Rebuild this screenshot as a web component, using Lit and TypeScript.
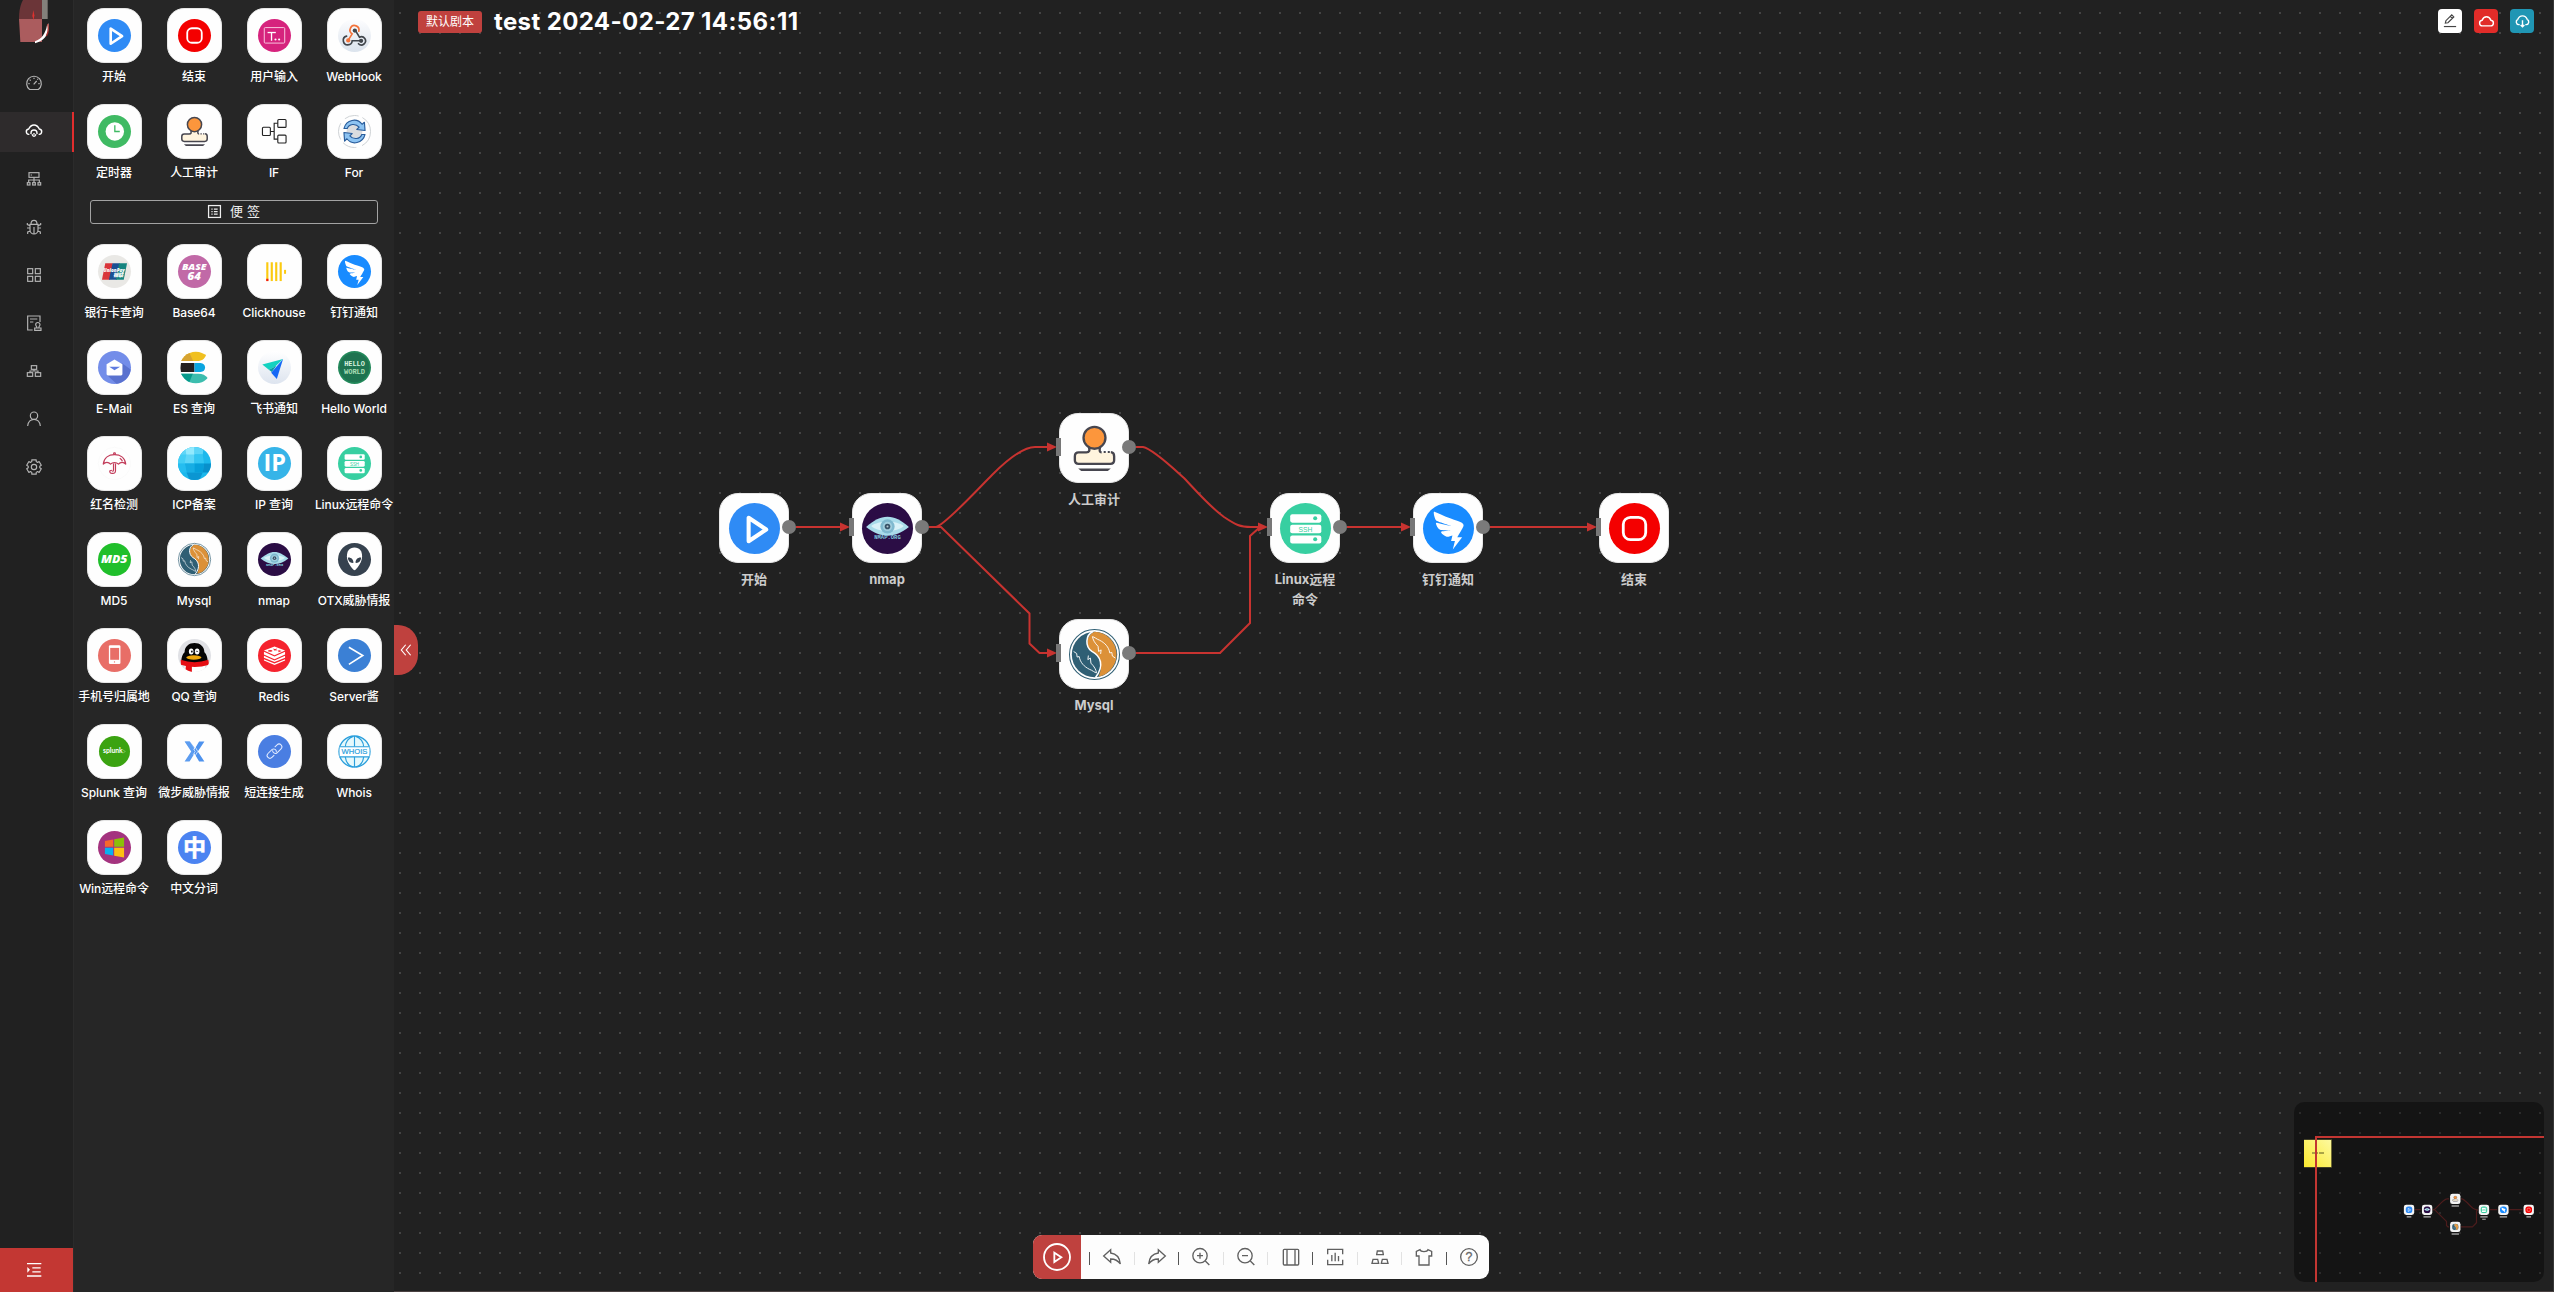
import { LitElement, html, svg, css, type SVGTemplateResult } from "lit";
import { customElement, property } from "lit/decorators.js";

type Glyphs = Record<string, SVGTemplateResult>;

const disc = (fill: string) => svg`<circle cx="50" cy="50" r="50" fill=${fill} />`;

const DOLPHIN = "M9 44 L15 48 L16 55 L20 54 C22 66 30 74 40 79 C46 81 51 86 54 86 C53 80 50 74 43 67 L42 57 L37 60 L38 52";

/* App glyphs, drawn on a 100 x 100 board. */
const APPS: Glyphs = {
  start: svg`${disc("#2f8bf5")}<path d="M38.5 29 V75 L73 52 Z" fill="none" stroke="#fff" stroke-width="8" stroke-linejoin="round" />`,
  end: svg`${disc("#f40000")}<rect x="28" y="28" width="44" height="44" rx="14" fill="none" stroke="#fff" stroke-width="5.5" />`,
  input: svg`${disc("#d6237d")}<rect x="19" y="26" width="62" height="47" rx="3" fill="none" stroke="#f9c4de" stroke-width="3" />
    <path d="M29 41 H54" stroke="#fff" stroke-width="4" /><path d="M41 41 V66" stroke="#fff" stroke-width="4" />
    <circle cx="53" cy="62" r="3.2" fill="#fff" /><circle cx="64" cy="62" r="3.2" fill="#fff" />`,
  webhook: svg`<defs><linearGradient id="wh" x1="0" y1="0" x2="0" y2="1"><stop offset="0" stop-color="#fdfdfe" /><stop offset="1" stop-color="#dbe3ed" /></linearGradient></defs>
    ${disc("url(#wh)")}<g fill="none" stroke-width="5" stroke-linecap="round">
    <path d="M63 37 A13.5 13.5 0 1 0 43 45 L33 61" stroke="#f3733b" /><path d="M26 52 A13.5 13.5 0 1 0 43 66 H66" stroke="#41464c" />
    <path d="M53 35 L65 55 A12.5 12.5 0 1 1 62 75" stroke="#41464c" /></g>
    <circle cx="51" cy="35" r="6.5" fill="#41464c" /><circle cx="31" cy="65" r="6.5" fill="#f3733b" /><circle cx="70" cy="66" r="6.5" fill="#41464c" />`,
  timer: svg`${disc("#3fba63")}<circle cx="51" cy="50" r="28" fill="#fff" /><path d="M51 31 V50 H66" fill="none" stroke="#3fba63" stroke-width="4" />`,
  audit: svg`<path d="M40 48 C42 54 41 58 34 58 H18 Q12 58 12 64 V74 Q12 80 18 80 H82 Q88 80 88 74 V64 Q88 58 82 58 H68 Q58 58 60 48 Z" fill="#fff4de" />
    <path d="M39 47 C41 54 40 57.500 34 57.500 H19 Q11.500 57.500 11.500 65 V73 Q11.500 80 19 80 H81 Q88.500 80 88.500 73 V65 Q88.500 57.500 82 57 M61 47 C59 54 60 57.500 64 57.500" fill="none" stroke="#47464f" stroke-width="4.600" />
    <path d="M68 57 H80" stroke="#47464f" stroke-width="4" stroke-dasharray="4 4" />
    <circle cx="50" cy="29" r="21.500" fill="#fc963c" stroke="#47464f" stroke-width="4.600" />
    <path d="M18 89 H82 L76 94 H24 Z" fill="#47464f" />`,
  branch: svg`<g fill="none" stroke="#222" stroke-width="3.400"><rect x="13.500" y="37" width="24" height="25" rx="3" /><rect x="60" y="13.500" width="25" height="24" rx="3" /><rect x="60" y="61" width="25" height="24" rx="3" />
    <path d="M38 50 H49 M60 25 H49 V73 H60" /></g>`,
  loop: svg`<circle cx="50" cy="50" r="48.500" fill="none" stroke="#c4c8cc" stroke-width="2.500" stroke-dasharray="52 18 44 12" />
    <circle cx="50" cy="50" r="24" fill="#dadcdf" /><g fill="#8cc3f2" stroke="#285c9b" stroke-width="3.500" stroke-linejoin="round">
    <path d="M18 41 C25 13 58 8 73 28 L80 22 L82 47 L57 44 L64 37 C53 24 33 27 28 41 Z" /><path d="M82 59 C75 87 42 92 27 72 L20 79 L18 53 L43 56 L36 63 C47 76 67 73 72 59 Z" /></g>`,
  bank: svg`${disc("#e9e8e5")}<path d="M22 25 H45 L36 75 H12 Z" fill="#d9343a" /><path d="M44 25 H66 L57 75 H33 Z" fill="#1b4f93" /><path d="M64 25 H88 L78 75 H54 Z" fill="#14847f" />
    <text x="49" y="52" font-size="18" text-anchor="middle" class="gi" textLength="64" lengthAdjust="spacingAndGlyphs" fill="#fff">UnionPay</text><text x="61" y="68" font-size="16" text-anchor="middle" class="gi" fill="#fff">银联</text>`,
  base64: svg`${disc("#c169a7")}<text x="49" y="46" font-size="27" text-anchor="middle" class="gi" textLength="74" lengthAdjust="spacingAndGlyphs" fill="#fff">BASE</text><text x="49" y="77" font-size="29" text-anchor="middle" class="gi" textLength="40" lengthAdjust="spacingAndGlyphs" fill="#fff">64</text>`,
  clickhouse: svg`<g fill="#fbca10"><rect x="25" y="22" width="6.500" height="57" /><rect x="38.500" y="22" width="6.500" height="57" /><rect x="52" y="22" width="6.500" height="57" /><rect x="65.500" y="22" width="6.500" height="57" /><rect x="79" y="45" width="6" height="12" /></g><rect x="25" y="72" width="6.500" height="7" fill="#f2171b" />`,
  dingtalk: svg`${disc("#188bff")}<path transform="translate(4.800 8.600) scale(.089)" fill="#fff" d="M573.7 252.5C422.5 197.4 201.3 96.7 201.3 96.7c-15.7-4.1-17.9 11.1-17.9 11.1-5 61.1 33.6 160.5 53.6 182.8 19.9 22.3 319.1 113.7 319.1 113.7S326 357.9 270.5 341.9c-55.6-16-37.9 17.8-37.9 17.8 11.4 61.7 64.9 131.8 107.2 138.4 42.2 6.6 220.1 4 220.1 4s-35.5 4.100-93.200 11.900c-42.700 5.800-97 12.500-111.100 17.800-33.100 12.500 24 62.600 24 62.600 84.700 76.800 129.700 50.500 129.700 50.500 33.300-10.700 61.400-18.500 85.200-24.200L565 743.100h84.600L603 928l205.300-271.900H700.800l22.300-38.700c.3.5.4.8.4.8S799.800 496.100 829 433.800l.6-1h-.1c5-10.800 8.600-19.700 10-25.800 17-71.300-114.500-99.400-265.800-154.500z" />`,
  email: svg`${disc("#738de9")}<path d="M73 37 L99 56 A50 50 0 0 1 56 99.500 L27 73 Z" fill="#5a72cf" /><path d="M26 40 L50 26 L74 40 V70 Q74 74 70 74 H30 Q26 74 26 70 Z" fill="#fff" /><path d="M34 48 H67 L50 58 Z" fill="#5f7be0" />`,
  es: svg`<clipPath id="esc"><circle cx="54" cy="50" r="48" /></clipPath><g clip-path="url(#esc)"><path d="M8 0 H90 C84 22 74 30 62 30 H8 Z" fill="#f0c020" /><path d="M8 0 H32 L46 30 H8 Z" fill="#d6a331" /><path d="M8 69 H62 Q80 69 90 82 V100 H8 Z" fill="#3cbdae" /><path d="M8 69 H45 L32 100 H8 Z" fill="#079a8b" /></g>
    <path d="M9 36 H50 V64 H9 Q6 50 9 36 Z" fill="#231f20" /><path d="M50 36 H68 Q82 38 82 50 Q82 62 68 64 H50 Z" fill="#0ba5df" />`,
  feishu: svg`<defs><linearGradient id="fs" x1="0" y1="0" x2="0" y2="1"><stop offset="0" stop-color="#fff" /><stop offset="1" stop-color="#dde4ef" /></linearGradient></defs>${disc("url(#fs)")}
    <path d="M13 41 L76 24 L52 47 L33 57 Z" fill="#14d2c0" /><path d="M33 57 L56 45 L42 64 Z" fill="#0a9da6" /><path d="M76 24 L57 85 L40 66 Z" fill="#1668f5" />`,
  hello: svg`${disc("#23895b")}<circle cx="50" cy="50" r="45" fill="#1e7350" /><text x="50" y="44" font-size="19" text-anchor="middle" class="gm" textLength="62" lengthAdjust="spacingAndGlyphs" fill="#d7f2df">HELLO</text><text x="50" y="69" font-size="19" text-anchor="middle" class="gm" textLength="64" lengthAdjust="spacingAndGlyphs" fill="#a9dcb4">WORLD</text>`,
  umbrella: svg`<circle cx="50" cy="50" r="49" fill="none" stroke="#f3f3f3" /><g fill="none" stroke="#c23c5a" stroke-width="3.600" stroke-linejoin="round">
    <path d="M16 52 C18 32 33 23 50 23 C67 23 82 32 84 52 C78 45 68 45 62 52 C56 46 44 46 38 52 C32 45 22 45 16 52 Z" /><path d="M47 23 L48 18 H52 L53 23 M66 34 Q72 38 74 43 M47 50 V70 Q47 74 43 73 M53 50 V72 Q53 81 43 80 Q34 79 36 72 L42 71" /></g>`,
  icp: svg`<clipPath id="icp"><circle cx="50" cy="50" r="50" /></clipPath><g clip-path="url(#icp)"><rect width="100" height="100" fill="#1cb8ec" /><path d="M0 0 H50 V50 H0 Z" fill="#5fd6f8" /><path d="M22 0 H50 V23 H25 Z" fill="#92e9fd" /><path d="M50 0 H78 L75 23 H50 Z" fill="#5cd5f8" /><path d="M50 23 H75 L79 50 H50 Z" fill="#33c5f2" />
    <path d="M0 23 H25 L20 50 H0 Z" fill="#43cef5" /><path d="M21 50 H50 V77 H26 Z" fill="#17ade4" /><path d="M50 50 H79 L75 77 H50 Z" fill="#079fda" /><path d="M79 50 H100 V77 H75 Z" fill="#0890cb" /><path d="M26 77 H75 L65 100 H35 Z" fill="#0b96d2" /><path d="M0 50 H21 L26 77 H0 Z" fill="#25bdf0" /></g>`,
  ip: svg`${disc("#36b4e8")}<text x="51" y="74" font-size="69" text-anchor="middle" class="gb" textLength="68" lengthAdjust="spacingAndGlyphs" fill="#fff">IP</text>`,
  ssh: svg`${disc("#37cfa1")}<g fill="#fff"><rect x="20" y="22" width="61" height="16.500" rx="4" /><rect x="20" y="42.500" width="61" height="17" rx="4" /><rect x="20" y="63.500" width="61" height="16" rx="4" /></g><circle cx="69" cy="30" r="4" fill="#37cfa1" /><circle cx="69" cy="71" r="4" fill="#37cfa1" />
    <text x="50" y="56.500" font-size="15.500" text-anchor="middle" class="gn" textLength="27" lengthAdjust="spacingAndGlyphs" fill="#37cfa1">SSH</text>`,
  md5: svg`${disc("#20bf2b")}<text x="49" y="62" font-size="34" text-anchor="middle" class="gi" textLength="80" lengthAdjust="spacingAndGlyphs" fill="#fff">MD5</text>`,
  mysql: svg`<circle cx="50" cy="50" r="49" fill="#fff" stroke="#2f5f74" stroke-width="2" /><circle cx="50" cy="50" r="44.500" fill="#2f5f74" />
    <path d="M50 5.500 C34 12 31 33 45 44 C62 53 68 70 58 93.500 A44.500 44.500 0 0 0 50 5.500 Z" fill="#dc9138" /><path d="M47 5 C32 12 31 34 45 44 C62 53 70 72 52 95" fill="none" stroke="#fff" stroke-width="3" />
    <g fill="none" stroke="#fff" stroke-width="1.800" stroke-linejoin="round"><path d=${DOLPHIN} /><path d=${DOLPHIN} transform="rotate(180 50 50.500)" /></g>`,
  nmap: svg`${disc("#2b0d45")}<path d="M8 47 C24 34 35 27 50 27 C65 27 76 34 92 47 C78 58 64 64 50 64 C36 64 22 58 8 47 Z" fill="#a9dcea" /><path d="M18 45 C32 34 68 34 82 45 C68 58 32 58 18 45 Z" fill="#d9f2f8" /><circle cx="50" cy="46" r="14" fill="#7fb9cf" /><circle cx="50" cy="46" r="9" fill="#a2cfdf" /><circle cx="50" cy="46" r="5.500" fill="#385368" /><circle cx="50" cy="46" r="2" fill="#b5c8d0" />
    <text x="50" y="70.500" font-size="9" text-anchor="middle" class="gm" textLength="52" lengthAdjust="spacingAndGlyphs" fill="#7cc8dd">NMAP.ORG</text>`,
  otx: svg`${disc("#36424f")}<path d="M50 14 C66 14 73 26 73 40 C73 58 60 74 53 81 Q50 84 47 81 C40 74 27 58 27 40 C27 26 34 14 50 14 Z" fill="#fff" /><path d="M30 44 C40 43 47 50 47 60 C38 62 30 55 30 44 Z M70 44 C60 43 53 50 53 60 C62 62 70 55 70 44 Z" fill="#36424f" />`,
  phone: svg`${disc("#e86e67")}<rect x="33" y="19" width="35" height="57" rx="4" fill="#fff" /><rect x="37" y="27" width="27" height="36" fill="#e86e67" /><circle cx="50" cy="69.500" r="2" fill="#e86e67" />`,
  qq: svg`<clipPath id="qqc"><circle cx="50" cy="50" r="50" /></clipPath>${disc("#e0e1e5")}<g clip-path="url(#qqc)"><path d="M11 76 C8 58 14 46 20 40 C20 22 34 12 50 12 C66 12 80 22 80 40 C86 46 92 58 89 76 Z" fill="#050505" /><path d="M20 74 H82 V100 H20 Z" fill="#fff" /><path d="M8 63 Q50 78 92 63 L94 78 Q50 92 9 78 Z" fill="#e60d12" /><path d="M24 80 H42 V100 H22 Z" fill="#e60d12" /></g>
    <ellipse cx="40" cy="38" rx="7" ry="9" fill="#fff" /><ellipse cx="58" cy="38" rx="7" ry="9" fill="#fff" /><ellipse cx="42" cy="38" rx="2.500" ry="3.500" fill="#000" /><path d="M54 39 Q57 34 61 39" fill="none" stroke="#000" stroke-width="2" /><ellipse cx="48" cy="56" rx="23" ry="6.500" fill="#f0a80c" />`,
  redis: svg`${disc("#f5232e")}<g fill="#fff"><path d="M18 35 L50 23 L82 35 L50 49 Z" /><path d="M18 39 L50 53 L82 39 V47 L50 61 L18 47 Z" /><path d="M18 51 L50 65 L82 51 V57 L50 70 L18 57 Z" /><path d="M18 61 L50 74 L82 61 V65 L50 79 L18 65 Z" /></g><g fill="#f5232e"><ellipse cx="37" cy="36" rx="7" ry="2.500" /><path d="M46 29 L52 31 L57 28 L55 32 L60 34 L49 35 Z" /><path d="M62 33 L72 36 L62 40 Z" /></g>`,
  server: svg`${disc("#3b80d5")}<path d="M33 25 L75 50 L33 77" fill="none" stroke="#fff" stroke-width="5" />`,
  splunk: svg`<circle cx="50" cy="50" r="47" fill="#3ba311" /><text x="15" y="55" font-size="20" class="gs" textLength="60" lengthAdjust="spacingAndGlyphs" fill="#fff">splunk</text><path d="M75 45 L83 50 L75 55" fill="none" stroke="#8fd06f" stroke-width="2" />`,
  xthreat: svg`<path d="M21 20 H36 L50 38 L44 49 Z" fill="#7fb2f5" /><path d="M20 20 H35 L54 50 L35 80 H20 L40 50 Z" fill="#5c9cf0" /><path d="M64 20 H80 L60 50 L80 80 H64 L46 50 Z" fill="#4d92ee" /><path d="M52 36 L60 50 L50 66 M47 42 L52 50 L46 60" fill="none" stroke="#fff" stroke-width="2" />`,
  link: svg`${disc("#4a7ee2")}<g transform="rotate(-45 50 49)" fill="none" stroke="#e3ecff" stroke-width="3"><path d="M41 57 H31 A8.500 8.500 0 0 1 31 40 H49 A8.500 8.500 0 0 1 52 55" /><path d="M59 41 H69 A8.500 8.500 0 0 1 69 58 H51 A8.500 8.500 0 0 1 48 43" /></g>`,
  whois: svg`<g fill="none" stroke="#2b9fdc" stroke-width="4"><circle cx="50" cy="50" r="47" fill="#e6f9fc" /><path d="M50 3 V36 M50 66 V97 M22 37 C22 22 32 8 46 4 M78 37 C78 22 68 8 54 4 M22 66 C24 82 34 94 46 97 M78 66 C76 82 66 94 54 97" stroke-width="3.500" /></g><rect x="5" y="35" width="90" height="31" fill="#fff" /><path d="M5 35.500 H95 M5 66.500 H95" stroke="#2b9fdc" stroke-width="3.500" /><text x="50" y="59" font-size="23" text-anchor="middle" class="gn" textLength="78" lengthAdjust="spacingAndGlyphs" fill="#2b9fdc" stroke="#2b9fdc" stroke-width=".6">WHOIS</text>`,
  windows: svg`${disc("#a4337f")}<path d="M21 30 L46 26 V48 H21 Z" fill="#f7682b" /><path d="M49 25 L79 20 V48 H49 Z" fill="#8bbf0a" /><path d="M21 51 H46 V74 L21 70 Z" fill="#09b1f0" /><path d="M49 51 H79 V80 L49 75 Z" fill="#fdc010" />`,
  words: svg`${disc("#4b83f1")}<text x="50" y="76" font-size="70" text-anchor="middle" class="gc" fill="#fff" stroke="#fff" stroke-width="1.500">中</text>`,
};

const gear = (): string => {
  const pts: string[] = [];
  for (let i = 0; i < 6; i++) {
    for (const [off, r] of [[-17, 22.5], [17, 22.5], [22, 17.5], [38, 17.5]]) {
      const a = ((i * 60 + off - 90) * Math.PI) / 180;
      pts.push(`${(24 + r * Math.cos(a)).toFixed(1)} ${(24 + r * Math.sin(a)).toFixed(1)}`);
    }
  }
  return `M${pts.join("L")}Z`;
};

/* Rail glyphs, 48 x 48 board. */
const RAIL: Glyphs = {
  dashboard: svg`<path d="M11 43.500 A22 22 0 1 1 37 43.500 Z" /><path d="M23 28 L32 18 M24 8 V12 M11 14 L14 17 M7 26 H11 M37 26 H41 M34 14 L36 12" />`,
  cloud: svg`<path stroke-width="4.200" d="M10 34 A8 8 0 0 1 8 18 C12 10 17 6 24 6 C31 6 36 10 40 18 A8 8 0 0 1 38 34" /><path stroke-width="4" d="M15 33 V30 A9 9 0 0 1 33 30 V33 M18 34 Q20 40 24 40 Q28 40 30 34 M24 30 V35" />`,
  deploy: svg`<rect x="9" y="5" width="30" height="14" /><path d="M14 12 H18 M24 19 V34 M8 34 V27 H40 V34" /><rect x="4" y="35" width="8" height="7" /><rect x="20" y="35" width="8" height="7" /><rect x="36" y="35" width="8" height="7" />`,
  bug: svg`<path d="M12 16 H36 V32 A12 13 0 0 1 12 32 Z M15 15 A9 11 0 0 1 33 15 M24 24 V44 M3 27 H12 M36 27 H45 M4 12 V17 L12 20 M44 12 V17 L36 20 M5 45 V39 L13 36 M43 45 V39 L35 36" />`,
  apps: svg`<rect x="5" y="5" width="15" height="15" /><rect x="28" y="5" width="15" height="15" /><rect x="5" y="28" width="15" height="15" /><rect x="28" y="28" width="15" height="15" />`,
  review: svg`<path d="M20 45 H5 V3 H42 V21 M12 12 H34 M12 21 H22" /><path d="M26 46 H45 V39 H26 Z M32 38 C34 34 29 33 29 29 A6.500 6.500 0 0 1 42 29 C42 33 37 34 39 38" />`,
  cluster: svg`<rect x="16" y="8" width="16" height="11" /><rect x="4" y="29" width="16" height="11" /><rect x="28" y="29" width="16" height="11" /><path d="M24 19 V24 M12 29 V24 H36 V29" />`,
  user: svg`<circle cx="24" cy="14" r="11" /><path d="M5 45 C6 32 15 25 24 25 C33 25 42 32 43 45" />`,
  setting: svg`<path stroke-linejoin="round" d=${gear()} /><circle cx="24" cy="24" r="8" />`,
  note: svg`<rect x="5" y="5" width="38" height="38" stroke-width="4" /><path d="M14 16 H18 M22 16 H34 M14 24 H18 M22 24 H34 M14 32 H18 M22 32 H34" stroke-width="4" />`,
  unfold: svg`<path d="M3 5 H46 M3 42 H46" stroke-width="4" /><path d="M19 17.500 H44 M19 29.500 H44" /><path d="M4 15 L12 23.500 L4 32 Z" fill="currentColor" stroke="none" />`,
  pen: svg`<path d="M8 31 L10 23 L30 3 L37 10 L17 30 L8 31 Z M25 8 L32 15" stroke-width="4" /><path d="M3 43 H45" stroke-width="4" />`,
  sky: svg`<path d="M12 38 A9 9 0 0 1 10 20 C13 12 18 9 24 9 C30 9 35 12 38 20 A9 9 0 0 1 36 38 Z" stroke-width="4.500" />`,
  download: svg`<path d="M15 34 H12 A9 9 0 0 1 9 17 C12 9 17 6 24 6 C31 6 36 9 39 17 A9 9 0 0 1 36 34 H33 M24 20 V42 M18 35 L24 41 L30 35" stroke-width="4.500" />`,
  fold: svg`<path d="M23 6 L8 24 L23 42 M40 6 L25 24 L40 42" stroke-width="4" />`,
};

/* Toolbar glyphs, 54 x 54 board. */
const TOOLS: Glyphs = {
  undo: svg`<path d="M2 24 L23 5 V15 C39 17 50 28 52 48 C44 36 36 33 23 33 V43 Z" />`,
  redo: svg`<path d="M52 24 L31 5 V15 C15 17 4 28 2 48 C10 36 18 33 31 33 V43 Z" />`,
  zoomIn: svg`<circle cx="24" cy="23" r="21.500" /><path d="M24 14 V32 M15 23 H33 M40 39 L52 51" />`,
  zoomOut: svg`<circle cx="24" cy="23" r="21.500" /><path d="M15 23 H33 M40 39 L52 51" />`,
  fit: svg`<rect x="4" y="4" width="46" height="47" rx="3" /><path d="M15 4 V51 M39 4 V51" />`,
  stats: svg`<path d="M5 19 V4 H50 V19 M5 35 V50 H50 V35 M17.500 21 V40 M27.500 14 V40 M37.500 24 V40" />`,
  cluster: svg`<path d="M19 9 H35 L37 20 H17 Z M6 34 H20 L23 46 H3 Z M34 34 H48 L51 46 H31 Z" />`,
  skin: svg`<path d="M15 5 L4 10 V24 H12 V51 H42 V24 H50 V10 L39 5 C37 13 17 13 15 5 Z" />`,
  help: svg`<circle cx="27" cy="27" r="25" /><text x="27" y="40" font-size="37" text-anchor="middle" class="gn" fill="#666" stroke="#666" stroke-width=".8">?</text>`,
};

const BUILTIN: [string, string][] = [
  ["start", "开始"], ["end", "结束"], ["input", "用户输入"], ["webhook", "WebHook"],
  ["timer", "定时器"], ["audit", "人工审计"], ["branch", "IF"], ["loop", "For"],
];
const PLUGINS: [string, string][] = [
  ["bank", "银行卡查询"], ["base64", "Base64"], ["clickhouse", "Clickhouse"], ["dingtalk", "钉钉通知"],
  ["email", "E-Mail"], ["es", "ES 查询"], ["feishu", "飞书通知"], ["hello", "Hello World"],
  ["umbrella", "红名检测"], ["icp", "ICP备案"], ["ip", "IP 查询"], ["ssh", "Linux远程命令"],
  ["md5", "MD5"], ["mysql", "Mysql"], ["nmap", "nmap"], ["otx", "OTX威胁情报"],
  ["phone", "手机号归属地"], ["qq", "QQ 查询"], ["redis", "Redis"], ["server", "Server酱"],
  ["splunk", "Splunk 查询"], ["xthreat", "微步威胁情报"], ["link", "短连接生成"], ["whois", "Whois"],
  ["windows", "Win远程命令"], ["words", "中文分词"],
];

interface FlowNode { icon: string; label: string; x: number; y: number; inlet: boolean; outlet: boolean }
const NODES: FlowNode[] = [
  { icon: "start", label: "开始", x: 325, y: 493, inlet: false, outlet: true },
  { icon: "nmap", label: "nmap", x: 458, y: 493, inlet: true, outlet: true },
  { icon: "audit", label: "人工审计", x: 665, y: 413, inlet: true, outlet: true },
  { icon: "mysql", label: "Mysql", x: 665, y: 619, inlet: true, outlet: true },
  { icon: "ssh", label: "Linux远程命令", x: 876, y: 493, inlet: true, outlet: true },
  { icon: "dingtalk", label: "钉钉通知", x: 1019, y: 493, inlet: true, outlet: true },
  { icon: "end", label: "结束", x: 1205, y: 493, inlet: true, outlet: false },
];

const EDGES = [
  "M402 527 H447",
  "M535 527 H542 C551 525 583 490 598 475 C617 456 631 447 641 447 H654",
  "M535 527 H547 L635.500 613.500 V643.500 L645.500 653 H654",
  "M742 447 H749 C759 449 780 469 790 478 C806 495 815 506 830 517 C842 525 846 527 857 527 H864",
  "M742 653 H826 L856 623 V536 L865 528",
  "M953 527 H1008",
  "M1096 527 H1194",
];
const ARROWS: [number, number][] = [[456, 527], [663, 447], [663, 653], [874, 527], [1017, 527], [1203, 527]];

const glyphStyles = css`
  .gi { font-family: "Open Sans", "Noto Sans CJK SC", sans-serif; font-style: italic; font-weight: 800; }
  .gb { font-family: "Open Sans", sans-serif; font-weight: 700; }
  .gm { font-family: "Liberation Mono", monospace; font-weight: 700; }
  .gn { font-family: "Liberation Sans", sans-serif; }
  .gs { font-family: Lato, sans-serif; font-weight: 700; }
  .gc { font-family: "Noto Sans CJK SC", sans-serif; font-weight: 700; }
`;

@customElement("app-tile")
export class AppTile extends LitElement {
  @property() icon = "";
  @property({ type: Boolean, reflect: true }) large = false;

  static styles = [
    glyphStyles,
    css`
      :host { display: grid; place-items: center; width: 55px; height: 55px; border-radius: 17px; background: #fefefe; box-sizing: border-box; border: 1px solid #e6e6e6; flex: none; }
      :host([large]) { width: 70px; height: 70px; border-radius: 19px; }
      .art { width: 33px; height: 33px; display: block; overflow: visible; }
      :host([large]) .art { width: 51px; height: 51px; margin-top: 1px; }
    `,
  ];

  render() {
    return html`<svg class="art" viewBox="0 0 100 100">${APPS[this.icon]}</svg>`;
  }
}

@customElement("app-root")
export class AppRoot extends LitElement {
  static styles = [
    glyphStyles,
    css`
      :host { display: flex; position: relative; width: 100vw; height: 100vh; overflow: hidden; background: #212121; color: #fff; font-family: Inter, "Noto Sans CJK SC", sans-serif; }
      .line { fill: none; stroke: currentColor; stroke-width: 3.5; display: block; flex: none; overflow: visible; }

      .rail { width: 73px; flex: none; display: flex; flex-direction: column; background: #212121; border-right: 1px solid #2b2b2b; }
      .logo { height: 64px; flex: none; padding-left: 19px; }
      .logo svg { display: block; }
      .menu { display: flex; flex-direction: column; gap: 8px; flex: 1; }
      .item { height: 40px; display: flex; align-items: center; padding: 0 0 2px 26px; box-sizing: border-box; color: #b4b4b4; }
      .item.on { color: #fff; background: #2e2b2c; border-right: 2px solid #e12d2d; margin-right: -1px; }
      .unfold { height: 44px; background: #c33733; display: flex; align-items: center; padding-left: 26px; }

      .panel { width: 320px; flex: none; background: #262626; padding-top: 8px; box-sizing: border-box; }
      .grid { display: grid; grid-template-columns: repeat(4, 80px); grid-auto-rows: 96px; }
      .cell { display: flex; flex-direction: column; align-items: center; gap: 5px; white-space: nowrap; font-size: 12px; font-weight: 500; line-height: 18px; letter-spacing: -0.08px; }
      .cell > span { display: flex; justify-content: center; width: 80px; }
      .notebtn { margin: 0 16px 20px; height: 24px; border: 1px solid #a3a3a3; border-radius: 3px; box-sizing: border-box; display: flex; align-items: center; justify-content: center; gap: 8px; font-size: 13px; color: #eee; line-height: 20px; letter-spacing: 4px; padding-bottom: 2px; }
      .notebtn span { margin-right: -3px; }

      .stage { flex: 1; position: relative; overflow: hidden; background-color: #212121; background-image: conic-gradient(from 0deg at 2px 2px, transparent 0 75%, #444 0); background-size: 20px 20px; background-position: 5px 12px; border-right: 1px solid #383838; border-bottom: 1px solid #4a4141; box-sizing: border-box; }
      .wires { position: absolute; left: 0; top: 0; display: block; }
      .head { display: flex; align-items: flex-start; justify-content: space-between; padding: 9px 19px 0 24px; }
      .name { display: flex; align-items: center; gap: 12px; height: 26px; }
      .tag { width: 64px; height: 22px; border-radius: 3px; background: #c0413e; display: grid; place-items: center; font-size: 12px; line-height: 22px; }
      .title { font-size: 24px; font-weight: 700; line-height: 26px; letter-spacing: 0.38px; margin: 0; }
      .acts { display: flex; gap: 12px; }
      .act { width: 24px; height: 24px; border-radius: 4px; display: grid; place-items: center; }
      .act.edit { background: #fff; color: #444; }
      .act.off { background: #e12c29; }
      .act.down { background: #2096b4; }

      .fold { position: absolute; left: 0; top: 625px; width: 24px; height: 50px; border-radius: 0 20px 20px 0; background: #bf413e; display: grid; place-items: center; }

      .node { position: absolute; width: 70px; display: flex; flex-direction: column; align-items: center; gap: 6px; }
      .caption { font-size: 13px; font-weight: 700; line-height: 20px; text-align: center; color: #ccc; }
      .in { position: absolute; left: -3px; top: 25px; width: 5px; height: 18px; background: #777; }
      .out { position: absolute; left: 63px; top: 27px; width: 14px; height: 14px; border-radius: 50%; background: #7a7a7a; }

      .bar { position: absolute; left: 639px; top: 1235px; width: 456px; height: 44px; border-radius: 9px; background: #fdfdfd; display: flex; align-items: center; overflow: hidden; color: #606060; }
      .run { width: 48px; height: 44px; flex: none; background: #bf413e; display: grid; place-items: center; color: #fff; margin-right: 8px; }
      .bar .line { stroke-width: 4; }
      .tool { display: flex; align-items: center; gap: 13.2px; width: 44.62px; flex: none; }
      .tool:last-child { width: 42px; }
      .sep { width: 1px; height: 13px; background: #e2e2e2; margin-top: 2px; }
      .sep.dark { background: #555; }

      .map { position: absolute; left: 1900px; top: 1102px; width: 250px; height: 180px; border-radius: 10px; background: rgba(0, 0, 0, 0.37); overflow: hidden; }
      .map svg { display: block; }
    `,
  ];

  private line(g: SVGTemplateResult, size = 16, box = 48) {
    return html`<svg class="line" width=${size} height=${size} viewBox="0 0 ${box} ${box}">${g}</svg>`;
  }

  private grid(list: [string, string][]) {
    return html`<div class="grid">${list.map(([icon, label]) => html`<div class="cell"><app-tile icon=${icon}></app-tile><span>${label}</span></div>`)}</div>`;
  }

  private rail() {
    const items = ["dashboard", "cloud", "deploy", "bug", "apps", "review", "cluster", "user", "setting"];
    return html`<nav class="rail">
      <div class="logo"><svg width="30" height="44" viewBox="0 0 90 132">
        <path d="M12 0 H69 V57 H0 C0 30 5 12 12 0 Z" fill="#6b3538" /><path d="M0 57 H69 V126 H4 L2 90 Z" fill="#ab5c5e" />
        <path d="M69 0 H86 V57 H69 Z" fill="#84807b" /><path d="M43 30 L46 46 L44 60 L40 48 Z" fill="#e0322f" />
        <path d="M88 70 C94 100 76 124 48 130 L48 124 C68 118 80 100 84 76 Z" fill="#fff" /><path d="M86 72 C90 88 88 98 82 108" fill="none" stroke="#a83330" stroke-width="4" />
      </svg></div>
      <div class="menu">${items.map((k) => html`<div class="item ${k === "cloud" ? "on" : ""}">${this.line(RAIL[k])}</div>`)}</div>
      <div class="unfold">${this.line(RAIL.unfold)}</div>
    </nav>`;
  }

  private toolbar() {
    const tools: [string, boolean][] = [["undo", true], ["redo", false], ["zoomIn", true], ["zoomOut", false], ["fit", false], ["stats", true], ["cluster", false], ["skin", false], ["help", true]];
    return html`<div class="bar">
      <div class="run"><svg class="line" width="28" height="28" viewBox="0 0 84 84"><circle cx="42" cy="42" r="39" stroke-width="5.500" /><path d="M34 29 V57 L55 43 Z" stroke-width="5.500" /></svg></div>
      ${tools.map(([k, dark]) => html`<div class="tool"><i class="sep ${dark ? "dark" : ""}"></i>${this.line(TOOLS[k], 18, 54)}</div>`)}
    </div>`;
  }

  private minimap() {
    return html`<div class="map"><svg width="250" height="180" viewBox="0 0 250 180">
      <defs><linearGradient id="memo" x1="1" y1="0" x2="0" y2="1"><stop offset="0" stop-color="#fdf9a0" /><stop offset="1" stop-color="#fbe92e" /></linearGradient></defs>
      <rect x="10" y="37.500" width="28" height="28" fill="#6e6a34" /><rect x="10" y="38" width="27" height="27" fill="url(#memo)" /><path d="M18 51 H24 M25 51 H30" stroke="#8f8a3a" stroke-width="1.500" />
      <g transform="translate(66.080 36) scale(.136)">
        <g fill="none" stroke="#4c1c1c" stroke-width="9">${EDGES.map((d) => svg`<path d=${d} />`)}</g>
        ${NODES.map((n) => svg`<g transform="translate(${n.x} ${n.y})"><rect x="-3" y="-3" width="76" height="76" rx="18" fill="#f4f4f4" /><svg x="9" y="9" width="52" height="52" viewBox="0 0 100 100">${APPS[n.icon]}</svg>
          <rect x=${n.label.length > 3 ? 8 : 18} y="82" width=${n.label.length > 3 ? 54 : 34} height="10" fill="#aaa" />${n.icon === "ssh" ? svg`<rect x="22" y="100" width="26" height="9" fill="#999" />` : ""}</g>`)}
      </g>
      <path d="M22 180 V35 H250" fill="none" stroke="#c33632" stroke-width="2" />
    </svg></div>`;
  }

  render() {
    return html`${this.rail()}
      <aside class="panel">
        ${this.grid(BUILTIN)}
        <div class="notebtn">${this.line(RAIL.note, 15)}<span>便签</span></div>
        ${this.grid(PLUGINS)}
      </aside>
      <main class="stage">
        <svg class="wires" width="2160" height="1292" viewBox="0 0 2160 1292">
          <g fill="none" stroke="#c83330" stroke-width="2">${EDGES.map((d) => svg`<path d=${d} />`)}</g>
          ${ARROWS.map(([x, y]) => svg`<path d="M${x} ${y} l-10 -4.500 v9 z" fill="#c83330" />`)}
        </svg>
        <header class="head">
          <div class="name"><span class="tag">默认剧本</span><h1 class="title">test 2024-02-27 14:56:11</h1></div>
          <div class="acts"><span class="act edit">${this.line(RAIL.pen, 14)}</span><span class="act off">${this.line(RAIL.sky, 15)}</span><span class="act down">${this.line(RAIL.download, 15)}</span></div>
        </header>
        ${NODES.map((n) => html`<div class="node" style="left:${n.x}px;top:${n.y}px">
          <app-tile large icon=${n.icon}></app-tile><span class="caption">${n.label}</span>
          ${n.inlet ? html`<i class="in"></i>` : ""}${n.outlet ? html`<i class="out"></i>` : ""}
        </div>`)}
        <div class="fold">${this.line(RAIL.fold, 14)}</div>
        ${this.toolbar()}${this.minimap()}
      </main>`;
  }
}
